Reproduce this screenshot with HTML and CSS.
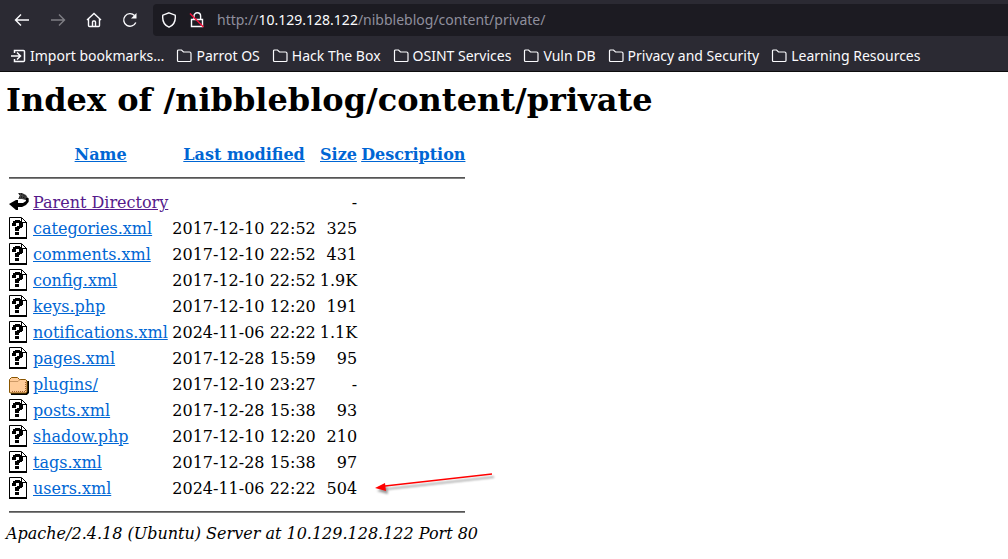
FILE: index.html
```html
<!DOCTYPE html>
<html lang="en">
<head>
<meta charset="utf-8">
<title>Index of /nibbleblog/content/private</title>
<link rel="stylesheet" href="styles.css">
</head>
<body>
<svg class="defs" aria-hidden="true">
  <symbol id="folder" viewBox="0 0 16 16"><path d="M1.500 12.500V3a1 1 0 0 1 1-1H5.500l2 2h6a1.500 1.500 0 0 1 1.500 1.500v7a1 1 0 0 1-1 1H2.500a1 1 0 0 1-1-1z" fill="none" stroke="#fbfbfe" stroke-width="1.200"/></symbol>
  <symbol id="unknown" viewBox="0 0 20 22">
    <path d="M.5.5H12.500L17.500 5.500V21.500H.5z" fill="#fff" stroke="#000"/>
    <path d="M17.500 5v16.500" fill="none" stroke="#000"/>
    <path d="M0 21h18" fill="none" stroke="#000" stroke-width="2"/>
    <path d="M12.500 1v4.500H17" fill="none" stroke="#000"/>
    <path d="M3 6h1V4h2V3h5v1h2v1h1v5h-1v1h-2v1h-1v2H6v-4h2V9h2V6H7v3H3zM6 15h4v3H6z"/>
  </symbol>
  <symbol id="back" viewBox="0 0 20 22">
    <path d="M9 2h4l4 2 2.500 4v3l-3-2L13 8H9l2-3z" fill="#444"/>
    <path d="M10 3h3l4 3M10 6h4l4 3" fill="none" stroke="#000" stroke-dasharray="1 1"/>
    <path d="M17 7h2.500v4L17 14l-4 2H9v3H7l-7-6 7-4h2v3h5l3-2z"/>
  </symbol>
  <symbol id="dir" viewBox="0 0 20 22">
    <path d="M2 21h15.500l1.500-1.500V8" fill="none" stroke="#000" stroke-width="2"/>
    <path d="M.5 19.500V6.500l2-2h6l2 2h6l1.500 1.500v11l-1 1h-15z" fill="#fc9" stroke="#850"/>
    <path d="M1 8.500h8l2-2" fill="none" stroke="#c96"/>
    <path d="M3 18.500h13.500V9" fill="none" stroke="#a63" stroke-dasharray="1 1"/>
  </symbol>
</svg>
<header class="chrome">
  <nav class="toolbar" aria-label="Navigation">
    <button class="tool" aria-label="Back"><svg viewBox="0 0 16 16"><path d="M15 8H2M7 2.500L1.500 8 7 13.500"/></svg></button>
    <button class="tool" aria-label="Forward" disabled><svg viewBox="0 0 16 16"><path d="M1 8h13M9 2.500L14.500 8 9 13.500"/></svg></button>
    <button class="tool" aria-label="Home"><svg viewBox="0 0 16 16"><path d="M1 8l7-6.500L15 8M2.500 7v6.500a1 1 0 0 0 1 1h9a1 1 0 0 0 1-1V7M6.500 14.500V10a1 1 0 0 1 1-1h1a1 1 0 0 1 1 1v4.500"/></svg></button>
    <button class="tool" aria-label="Reload"><svg viewBox="0 0 16 16"><path d="M13.800 10.500A6.300 6.300 0 1 1 12.500 3.500"/><path d="M14.500 1v5.500H9z" fill="#fbfbfe" stroke="none"/></svg></button>
    <div class="address">
      <svg class="status" viewBox="0 0 16 16"><path d="M8 .8l6.200 2.400c.6 5-1.200 9.800-6.200 12C3 13 1.200 8.200 1.800 3.200z"/></svg>
      <svg class="status" viewBox="0 0 16 16"><path d="M5 7V4a3.300 3.300 0 0 1 6.600 0v3M2.500 7.500h11v7h-11z"/><path class="strike" d="M1 1.500l13.500 13.500"/></svg>
      <div class="url">http://<span class="host">10.129.128.122</span>/nibbleblog/content/private/</div>
    </div>
  </nav>
  <nav class="bookmarks" aria-label="Bookmarks">
    <button class="mark"><svg viewBox="0 0 16 16"><path d="M1 8h9M7 4.500L10.500 8 7 11.500M4.500 5V2.500h9a1 1 0 0 1 1 1v9a1 1 0 0 1-1 1h-9V11" fill="none" stroke="#fbfbfe" stroke-width="1.500"/></svg>Import bookmarks…</button>
    <button class="mark"><svg><use href="#folder"/></svg>Parrot OS</button>
    <button class="mark"><svg><use href="#folder"/></svg>Hack The Box</button>
    <button class="mark"><svg><use href="#folder"/></svg>OSINT Services</button>
    <button class="mark"><svg><use href="#folder"/></svg>Vuln DB</button>
    <button class="mark"><svg><use href="#folder"/></svg>Privacy and Security</button>
    <button class="mark"><svg><use href="#folder"/></svg>Learning Resources</button>
  </nav>
</header>
<main class="page">
  <h1>Index of /nibbleblog/content/private</h1>
  <table class="listing">
    <tr><th class="pic"></th><th><a href="#">Name</a></th><th><a href="#">Last modified</a></th><th><a href="#">Size</a></th><th><a href="#">Description</a></th></tr>
    <tr><th class="rule" colspan="5"><hr></th></tr>
    <tr><td class="pic"><svg><use href="#back"/></svg></td><td><a class="seen" href="#">Parent Directory</a></td><td></td><td class="num">-</td><td></td></tr>
    <tr><td class="pic"><svg><use href="#unknown"/></svg></td><td><a href="#">categories.xml</a></td><td class="num">2017-12-10 22:52</td><td class="num">325</td><td></td></tr>
    <tr><td class="pic"><svg><use href="#unknown"/></svg></td><td><a href="#">comments.xml</a></td><td class="num">2017-12-10 22:52</td><td class="num">431</td><td></td></tr>
    <tr><td class="pic"><svg><use href="#unknown"/></svg></td><td><a href="#">config.xml</a></td><td class="num">2017-12-10 22:52</td><td class="num">1.9K</td><td></td></tr>
    <tr><td class="pic"><svg><use href="#unknown"/></svg></td><td><a href="#">keys.php</a></td><td class="num">2017-12-10 12:20</td><td class="num">191</td><td></td></tr>
    <tr><td class="pic"><svg><use href="#unknown"/></svg></td><td><a href="#">notifications.xml</a></td><td class="num">2024-11-06 22:22</td><td class="num">1.1K</td><td></td></tr>
    <tr><td class="pic"><svg><use href="#unknown"/></svg></td><td><a href="#">pages.xml</a></td><td class="num">2017-12-28 15:59</td><td class="num">95</td><td></td></tr>
    <tr><td class="pic"><svg><use href="#dir"/></svg></td><td><a href="#">plugins/</a></td><td class="num">2017-12-10 23:27</td><td class="num">-</td><td></td></tr>
    <tr><td class="pic"><svg><use href="#unknown"/></svg></td><td><a href="#">posts.xml</a></td><td class="num">2017-12-28 15:38</td><td class="num">93</td><td></td></tr>
    <tr><td class="pic"><svg><use href="#unknown"/></svg></td><td><a href="#">shadow.php</a></td><td class="num">2017-12-10 12:20</td><td class="num">210</td><td></td></tr>
    <tr><td class="pic"><svg><use href="#unknown"/></svg></td><td><a href="#">tags.xml</a></td><td class="num">2017-12-28 15:38</td><td class="num">97</td><td></td></tr>
    <tr><td class="pic"><svg><use href="#unknown"/></svg></td><td><a href="#">users.xml</a></td><td class="num">2024-11-06 22:22</td><td class="num">504</td><td class="pointed"><svg class="arrow" viewBox="0 0 126 30"><path d="M11 16L118 4" stroke="#f00" stroke-width="1.600"/><path d="M1 18l10-5 1 8z" fill="#f00"/></svg></td></tr>
    <tr><th class="rule" colspan="5"><hr></th></tr>
  </table>
  <address>Apache/2.4.18 (Ubuntu) Server at 10.129.128.122 Port 80</address>
</main>
</body>
</html>
```
FILE: styles.css
```css
body { margin: 0; background: #fff; color: #000; font: 16px "DejaVu Serif", serif; }
.defs { position: absolute; width: 0; height: 0; }
.chrome { background: #2b2a33; border-bottom: 1px solid #0c0c0d; color: #fbfbfe; font: 14px/20px "Noto Sans", sans-serif; }
.toolbar { display: flex; align-items: center; padding: 4px 0 4px 4px; }
.tool { width: 36px; height: 32px; padding: 0 10px; border: 0; background: none; }
.tool svg, .status { display: block; width: 16px; height: 16px; fill: none; stroke: #fbfbfe; stroke-width: 1.4; }
.tool:disabled { opacity: .4; }
.address { flex: 1; display: flex; align-items: center; gap: 12px; height: 32px; margin-left: 5px; padding-left: 8px; border-radius: 4px 0 0 4px; background: #1c1b22; }
.status .strike { stroke: #f5103c; }
.url { color: #8f8f9d; }
.host { color: #fbfbfe; }
.bookmarks { display: flex; gap: 12px; padding: 6px 0 5px 10px; }
.mark { display: flex; align-items: center; gap: 4px; padding: 0; border: 0; background: none; color: inherit; font: inherit; white-space: nowrap; }
.mark svg { width: 16px; height: 16px; }
.page { padding: 10px 6px; }
h1 { margin: 0 0 21px; font-size: 32px; line-height: 37px; }
.listing { border-spacing: 2px; }
.listing td, .listing th { padding: 2px 1px 0; line-height: 22px; white-space: nowrap; }
.listing .pic, .listing .rule { padding: 1px; }
.pic { width: 20px; height: 22px; }
.pic svg { display: block; width: 20px; height: 22px; }
a { color: #0066d4; }
a.seen { color: #551a8b; }
.num { text-align: right; }
hr { margin: 8px 0; border: 0; border-top: 1px solid #555; border-bottom: 1px solid #808080; }
.pointed { position: relative; }
.listing .arrow { position: absolute; left: 14px; top: -6px; width: 126px; height: 30px; filter: drop-shadow(2px 3px 1px #0006); }
address { line-height: 19px; }
```
